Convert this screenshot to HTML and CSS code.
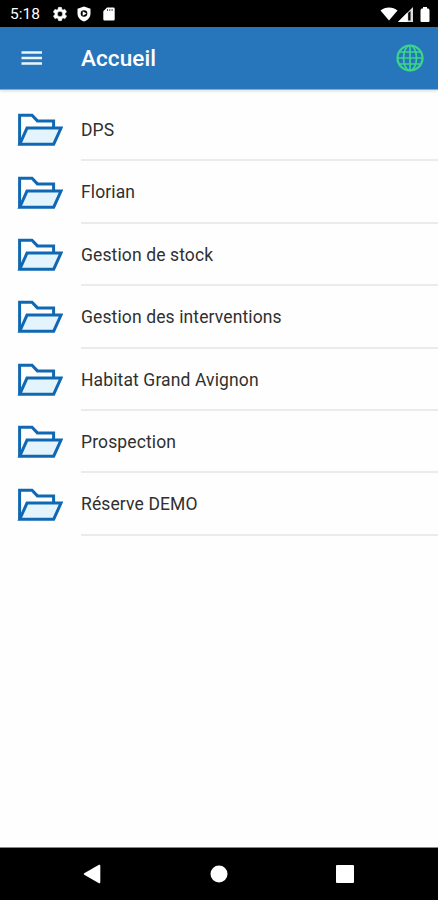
FILE: index.html
```html
<!DOCTYPE html>
<html lang="fr">
  <head>
    <meta charset="UTF-8" />
    <meta name="viewport" content="width=device-width, initial-scale=1.0" />
    <title>Accueil</title>
    <link rel="stylesheet" href="styles.css">
  </head>
  <body>
    <svg class="symbols" width="0" height="0">
      <symbol id="folder" viewBox="0 0 46 34">
        <path d="M2.6 31.2V2.200H15l5.400 5.700h16.200v7.200" fill="none" />
        <path d="M10 15.100h34l-7.300 16.100H2.800z" fill="#e3f4fd" />
      </symbol>
    </svg>

    <div class="status">
      <span class="time">5:18</span>
      <svg class="gear" width="16" height="16" viewBox="0 0 24 24">
        <path fill="#fff" stroke="#fff" stroke-width=".8" fill-rule="evenodd" d="M19.4 13c0-.3.1-.6.1-1s0-.7-.1-1l2.1-1.6c.2-.2.2-.4.1-.6l-2-3.5c-.1-.2-.4-.3-.6-.2l-2.5 1c-.5-.4-1.1-.7-1.7-1l-.4-2.6c0-.3-.2-.5-.5-.5h-4c-.3 0-.5.2-.5.4l-.4 2.7c-.6.2-1.2.6-1.7 1l-2.5-1c-.2-.1-.5 0-.6.2l-2 3.5c-.1.2-.1.4.1.6L4.5 11c0 .3-.1.6-.1 1s0 .7.1 1l-2.1 1.6c-.2.2-.2.4-.1.6l2 3.5c.1.2.4.3.6.2l2.5-1c.5.4 1.1.7 1.7 1l.4 2.6c0 .3.2.5.5.5h4c.3 0 .5-.2.5-.4l.4-2.7c.6-.2 1.2-.6 1.7-1l2.5 1c.2.1.5 0 .6-.2l2-3.5c.1-.2.1-.4-.1-.6zM12 16a4 4 0 1 1 0-8 4 4 0 0 1 0 8z" />
      </svg>
      <svg class="shield" width="14" height="16" viewBox="0 0 14 16">
        <path fill="#fff" d="M7 .5l6.500 2.300v4.700c0 3.700-2.600 6.800-6.500 8-3.900-1.200-6.500-4.300-6.500-8V2.800z" />
        <circle cx="7" cy="7.500" r="3.300" fill="#000" />
        <path fill="#fff" d="M5.700 5.200v4.600l3.900-2.300z" />
      </svg>
      <svg class="card" width="12" height="14" viewBox="0 0 12 14">
        <path fill="#fff" d="M4 .5h6.500a1.200 1.200 0 0 1 1.200 1.200v10.600a1.200 1.200 0 0 1-1.200 1.200h-9A1.200 1.200 0 0 1 .3 12.300V4.200z" />
        <path stroke="#555" stroke-width="1" d="M4.500 2v2M6.800 2v2M9.100 2v2" />
      </svg>
      <svg class="wifi" width="18" height="14" viewBox="0 0 18 14">
        <path fill="#fff" d="M9 13.500L.5 3.500C5-.5 13-.5 17.500 3.500z" />
      </svg>
      <svg class="signal" width="15" height="15" viewBox="0 0 15 15">
        <path fill="#ddd" d="M0 15L15 0v15z" />
        <path fill="#fff" d="M0 15L9.500 5.500V15z" />
        <path fill="#000" d="M10.200 6l2.300-2v9.500h-2.300z" />
      </svg>
      <svg class="battery" width="10" height="15" viewBox="0 0 10 15">
        <path fill="#fff" d="M3 0h4v1.500h1.500L9.500 3v11a1 1 0 0 1-1 1h-7a1 1 0 0 1-1-1V3l1-1.500H3z" />
      </svg>
    </div>

    <header class="header">
      <svg class="menu" width="22" height="16" viewBox="0 0 22 16">
        <path stroke="#edf5fc" stroke-width="2.300" d="M.5 2.500h20.500M.5 8h20.500M.5 13.500h20.500" />
      </svg>
      <h1>Accueil</h1>
      <svg class="globe" width="28" height="28" viewBox="0 0 28 28">
        <g fill="none" stroke="#3cd58a" stroke-width="1.700">
          <circle cx="14" cy="14" r="12.500" stroke-width="2.200" />
          <ellipse cx="14" cy="14" rx="6.500" ry="12.500" />
          <path d="M14 1.500v25M1.500 14h25M3.600 8h20.800M3.600 20h20.800" />
        </g>
      </svg>
    </header>

    <main class="list">
      <div class="row"><svg class="folder"><use href="#folder" /></svg><span class="label">DPS</span></div>
      <div class="row"><svg class="folder"><use href="#folder" /></svg><span class="label">Florian</span></div>
      <div class="row"><svg class="folder"><use href="#folder" /></svg><span class="label">Gestion de stock</span></div>
      <div class="row"><svg class="folder"><use href="#folder" /></svg><span class="label">Gestion des interventions</span></div>
      <div class="row"><svg class="folder"><use href="#folder" /></svg><span class="label">Habitat Grand Avignon</span></div>
      <div class="row"><svg class="folder"><use href="#folder" /></svg><span class="label">Prospection</span></div>
      <div class="row"><svg class="folder"><use href="#folder" /></svg><span class="label">Réserve DEMO</span></div>
    </main>

    <nav class="navbar">
      <svg width="18" height="20" viewBox="0 0 18 20">
        <path fill="#fff" d="M16 .8a1 1 0 0 1 1.300.9v16.600a1 1 0 0 1-1.300.9L1.200 10.800a1 1 0 0 1 0-1.600z" />
      </svg>
      <svg width="18" height="18" viewBox="0 0 18 18">
        <circle cx="9" cy="9" r="8.500" fill="#fff" />
      </svg>
      <svg width="18" height="18" viewBox="0 0 18 18">
        <rect width="18" height="18" rx="1" fill="#fff" />
      </svg>
    </nav>
  </body>
</html>
```

FILE: styles.css
```css
* {
  box-sizing: border-box;
}
body {
  display: flex;
  flex-direction: column;
  height: 900px;
  margin: 0;
  font-family: Roboto, "Liberation Sans", sans-serif;
  background-color: #fefefe;
}
svg {
  display: block;
  flex: none;
}
.symbols {
  position: absolute;
}
.status {
  display: flex;
  align-items: center;
  height: 27px;
  padding: 1px 8px 0 10px;
  background-color: #000;
  color: #fff;
}
.time {
  width: 42px;
  font-size: 15.5px;
}
.shield {
  margin-left: 9px;
}
.card {
  margin-left: 12px;
}
.wifi {
  margin-left: auto;
}
.battery {
  margin-left: 7px;
}
.header {
  display: flex;
  align-items: center;
  height: 63px;
  padding: 0 14px 0 21px;
  background-color: #2775bb;
  border-bottom: 1px solid #91abc3;
  box-shadow: 0 1px 3px rgba(0, 0, 0, 0.15);
}
.header h1 {
  flex: 1;
  margin: 0 0 0 38px;
  color: #fff;
  font-size: 22.5px;
  font-weight: 500;
  letter-spacing: 0.1px;
}
.list {
  flex: 1;
  padding-top: 9px;
}
.row {
  display: flex;
  align-items: center;
  height: 62.4px;
  padding-left: 17px;
}
.folder {
  width: 46px;
  height: 34px;
  stroke: #1068b3;
  stroke-width: 3;
}
.label {
  flex: 1;
  height: 100%;
  margin-left: 18px;
  border-bottom: 2px solid #ebebeb;
  color: #303030;
  font-size: 17.5px;
  line-height: 63px;
  letter-spacing: 0.12px;
}
.navbar {
  display: flex;
  align-items: center;
  justify-content: space-between;
  height: 53px;
  padding: 0 84px 0 83px;
  border-top: 1px solid #888;
  background-color: #000;
}
```
